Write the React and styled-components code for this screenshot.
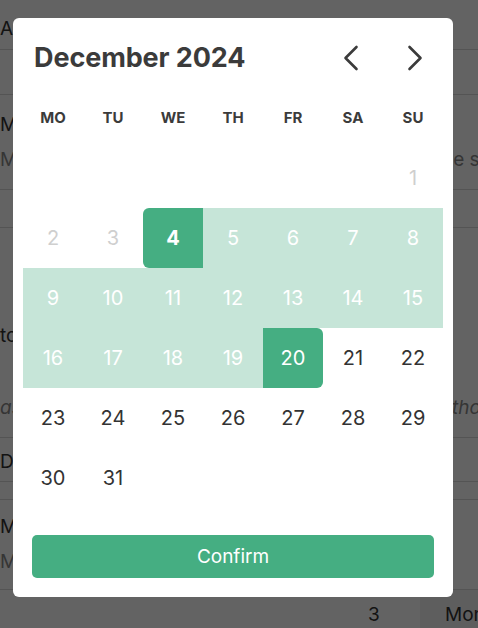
import React from "react";
import styled, { createGlobalStyle } from "styled-components";

const Global = createGlobalStyle`
  html, body { margin: 0; padding: 0; }
  body {
    width: 478px; height: 628px; overflow: hidden;
    font-family: Inter, "Noto Sans", sans-serif;
    background: #fff;
  }
`;

/* ---------- background page ---------- */
const Page = styled.div`
  width: 478px;
  height: 628px;
  overflow: hidden;
  display: flex;
  flex-direction: column;
  font-family: Inter, sans-serif;
  color: #333;
`;

const PageRow = styled.div`
  height: ${(p) => p.$h}px;
  flex: none;
  box-sizing: border-box;
  border-bottom: ${(p) => (p.$line ? "1px solid #d8d8d8" : "none")};
  display: flex;
  flex-direction: column;
  justify-content: ${(p) => p.$justify || "center"};
  gap: ${(p) => p.$gap || 0}px;
  padding: ${(p) => p.$pad || "0"};
`;

const PageLine = styled.div`
  display: flex;
  white-space: nowrap;
  font-size: 19px;
  line-height: 24px;
  color: ${(p) => (p.$muted ? "#8a8a8a" : "#333")};
  font-style: ${(p) => (p.$italic ? "italic" : "normal")};
`;

const RightText = styled.span`
  margin-left: auto;
  width: ${(p) => p.$w}px;
  flex: none;
  overflow: hidden;
`;

const BottomRow = styled.div`
  height: 48px;
  flex: none;
  display: flex;
  align-items: center;
  white-space: nowrap;
  font-size: 19px;
`;

const BottomNum = styled.span`
  flex: none;
  margin-left: 368px;
  width: 52px;
`;

const BottomCell = styled.span`
  flex: 1;
  min-width: 0;
  overflow: hidden;
  align-self: stretch;
  display: flex;
  align-items: center;
  padding-left: 25px;
  background: #f2f2f2;
`;

/* ---------- overlay + modal ---------- */
const Overlay = styled.div`
  position: fixed;
  inset: 0;
  background: rgba(0, 0, 0, 0.61);
  display: flex;
  align-items: flex-start;
  justify-content: flex-start;
  padding: 18px 0 0 13px;
`;

const Modal = styled.div`
  width: 440px;
  box-sizing: border-box;
  background: #fff;
  border-radius: 6px;
  padding: 0 10px 19px;
  display: flex;
  flex-direction: column;
  font-family: Inter, "Noto Sans", sans-serif;
`;

const Header = styled.div`
  height: 70px;
  box-sizing: border-box;
  display: flex;
  align-items: center;
  justify-content: space-between;
  padding: 9px 8px 0 11px;
`;

const Title = styled.h2`
  margin: 0;
  font-size: 27px;
  font-weight: 700;
  color: #3b3b3b;
  letter-spacing: -0.1px;
`;

const Nav = styled.div`
  display: flex;
  gap: 24px;
`;

const NavButton = styled.button`
  width: 40px;
  height: 40px;
  border: none;
  background: transparent;
  padding: 0;
  display: flex;
  align-items: center;
  justify-content: center;
  cursor: pointer;
  color: #3b3b3b;
`;

const Grid = styled.div`
  display: grid;
  grid-template-columns: repeat(7, 60px);
  grid-auto-rows: 60px;
`;

const WeekDay = styled.div`
  display: flex;
  align-items: center;
  justify-content: center;
  padding-bottom: 2px;
  font-size: 15px;
  font-weight: 700;
  color: #3b3b3b;
`;

const bgFor = (v) =>
  v === "start" || v === "end" ? "#45ae82" : v === "range" ? "#c6e5d8" : "transparent";
const colorFor = (v) =>
  v === "muted" ? "#cfcfcf" : v === "normal" ? "#333" : "#fff";
const radiusFor = (v) =>
  v === "start" ? "6px 0 0 6px" : v === "end" ? "0 6px 6px 0" : "0";

const Day = styled.div`
  display: flex;
  align-items: center;
  justify-content: center;
  font-size: 20px;
  font-weight: ${(p) => (p.$variant === "start" ? 700 : 400)};
  color: ${(p) => colorFor(p.$variant)};
  background: ${(p) => bgFor(p.$variant)};
  border-radius: ${(p) => radiusFor(p.$variant)};
`;

const ConfirmButton = styled.button`
  margin: 27px 9px 0;
  height: 43px;
  border: none;
  border-radius: 5px;
  background: #45ae82;
  color: #fff;
  font-family: Inter, "Noto Sans", sans-serif;
  font-size: 19px;
  font-weight: 400;
  cursor: pointer;
`;

const Chevron = ({ dir }) => (
  <svg width="16" height="26" viewBox="0 0 16 26" fill="none">
    <polyline
      points={dir === "left" ? "13.5,2 2.5,13 13.5,24" : "2.5,2 13.5,13 2.5,24"}
      stroke="currentColor"
      strokeWidth="2.6"
      strokeLinecap="round"
      strokeLinejoin="round"
    />
  </svg>
);

const weekDays = ["MO", "TU", "WE", "TH", "FR", "SA", "SU"];

function variantFor(d) {
  if (d <= 3) return "muted";
  if (d === 4) return "start";
  if (d < 20) return "range";
  if (d === 20) return "end";
  return "normal";
}

export default function App() {
  const cells = [];
  for (let i = 0; i < 6; i++) cells.push({ key: "e" + i, day: null });
  for (let d = 1; d <= 31; d++) cells.push({ key: "d" + d, day: d });

  return (
    <>
      <Global />
      <Page>
        <PageRow $h={50} $line $pad="8px 0 0">
          <PageLine>
            <span>Automatic</span>
          </PageLine>
        </PageRow>
        <PageRow $h={45} $line />
        <PageRow $h={95} $line $gap={11}>
          <PageLine>
            <span>Manual entry</span>
          </PageLine>
          <PageLine $muted>
            <span>Manual</span>
            <RightText $w={49}>Use same</RightText>
          </PageLine>
        </PageRow>
        <PageRow $h={38} $line />
        <PageRow $h={210} $line $justify="flex-end" $pad="0 0 17px" $gap={48}>
          <PageLine>
            <span>to</span>
          </PageLine>
          <PageLine $muted $italic>
            <span>as</span>
            <RightText $w={54}>Method</RightText>
          </PageLine>
        </PageRow>
        <PageRow $h={44} $line $pad="4px 0 0">
          <PageLine>
            <span>Date</span>
          </PageLine>
        </PageRow>
        <PageRow $h={18} $line />
        <PageRow $h={90} $line $gap={11}>
          <PageLine>
            <span>Manual</span>
          </PageLine>
          <PageLine $muted>
            <span>Manual</span>
          </PageLine>
        </PageRow>
        <BottomRow>
          <BottomNum>3</BottomNum>
          <BottomCell>Monday</BottomCell>
        </BottomRow>
      </Page>

      <Overlay>
        <Modal>
          <Header>
            <Title>December 2024</Title>
            <Nav>
              <NavButton aria-label="Previous month">
                <Chevron dir="left" />
              </NavButton>
              <NavButton aria-label="Next month">
                <Chevron dir="right" />
              </NavButton>
            </Nav>
          </Header>
          <Grid>
            {weekDays.map((w) => (
              <WeekDay key={w}>{w}</WeekDay>
            ))}
            {cells.map((c) =>
              c.day ? (
                <Day key={c.key} $variant={variantFor(c.day)}>
                  {c.day}
                </Day>
              ) : (
                <Day key={c.key} $variant="empty" />
              )
            )}
          </Grid>
          <ConfirmButton>Confirm</ConfirmButton>
        </Modal>
      </Overlay>
    </>
  );
}
